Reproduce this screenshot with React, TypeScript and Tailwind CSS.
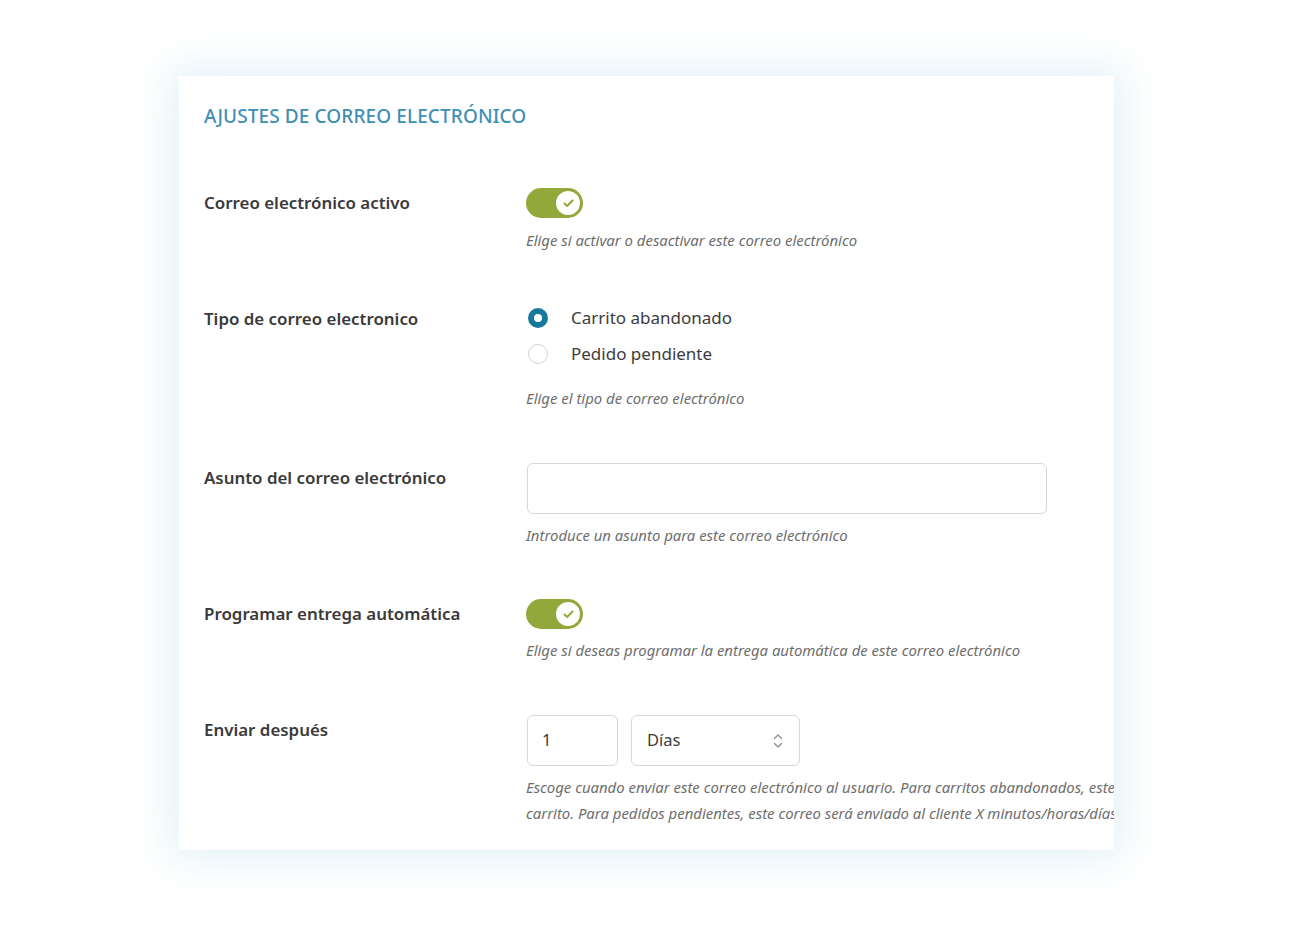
import React from "react";

const font = { fontFamily: '"Noto Sans", "Open Sans", sans-serif' };

function Toggle() {
  return (
    <div className="relative h-[30px] w-[57px] rounded-full bg-[#93a83a]">
      <div className="absolute right-[3px] top-[3px] flex h-[24px] w-[24px] items-center justify-center rounded-full bg-white">
        <svg width="11" height="9" viewBox="0 0 11 9" fill="none">
          <path d="M1.5 4.5L4.2 7L9.5 1.5" stroke="#93a83a" strokeWidth="2" strokeLinecap="round" strokeLinejoin="round" />
        </svg>
      </div>
    </div>
  );
}

function Help({ children, className = "" }: { children: React.ReactNode; className?: string }) {
  return (
    <div className={`text-[14.9px] italic leading-[20px] text-[#6e6e6e] ${className}`}>{children}</div>
  );
}

function Label({ children }: { children: React.ReactNode }) {
  return (
    <div className="w-[322px] shrink-0 text-[16.9px] font-semibold leading-[30px] text-[#3a3a3a]">{children}</div>
  );
}

export default function App() {
  return (
    <div className="min-h-[939px] bg-white pl-[179px] pt-[76px]" style={font}>
      <div className="relative h-[774px] w-[935px] overflow-hidden bg-white pl-[25px] pt-[102px] shadow-[0_0_40px_8px_rgba(190,225,238,0.45)]">
        <div className="absolute left-[25px] top-[26px] text-[19px] font-medium uppercase leading-[28px] tracking-[0.1px] text-[#3f8fb5]">
          Ajustes de correo electrónico
        </div>

        <div className="mt-[10px] flex">
          <Label>Correo electrónico activo</Label>
          <div>
            <Toggle />
            <Help className="mt-[12px]">Elige si activar o desactivar este correo electrónico</Help>
          </div>
        </div>

        <div className="mt-[54px] flex">
          <Label>Tipo de correo electronico</Label>
          <div>
            <div className="flex h-[28px] items-center">
              <div className="ml-[2px] h-[20px] w-[20px] rounded-full border-[6px] border-[#17799a] bg-white" />
              <span className="ml-[23px] text-[17px] text-[#3c3c3c]">Carrito abandonado</span>
            </div>
            <div className="mt-[8px] flex h-[28px] items-center">
              <div className="ml-[2px] h-[20px] w-[20px] rounded-full border border-[#cfd3d8] bg-white" />
              <span className="ml-[23px] text-[17px] text-[#3c3c3c]">Pedido pendiente</span>
            </div>
            <Help className="mt-[20px]">Elige el tipo de correo electrónico</Help>
          </div>
        </div>

        <div className="mt-[55px] flex">
          <Label>Asunto del correo electrónico</Label>
          <div>
            <div className="ml-px h-[51px] w-[520px] rounded-[6px] border border-[#d5d8dc] bg-white" />
            <Help className="mt-[11px]">Introduce un asunto para este correo electrónico</Help>
          </div>
        </div>

        <div className="mt-[54px] flex">
          <Label>Programar entrega automática</Label>
          <div>
            <Toggle />
            <Help className="mt-[11px]">Elige si deseas programar la entrega automática de este correo electrónico</Help>
          </div>
        </div>

        <div className="mt-[55px] flex">
          <Label>Enviar después</Label>
          <div className="min-w-0">
            <div className="ml-px flex gap-[13px]">
              <div className="flex h-[51px] w-[91px] items-center rounded-[6px] border border-[#d5d8dc] bg-white pl-[14px] text-[16.5px] text-[#3c3c3c]">
                1
              </div>
              <div className="flex h-[51px] w-[169px] items-center justify-between rounded-[6px] border border-[#d5d8dc] bg-white pl-[15px] pr-[16px] text-[16.5px] text-[#3c3c3c]">
                <span>Días</span>
                <svg width="10" height="16" viewBox="0 0 10 16" fill="none">
                  <path d="M1.5 5.5L5 2L8.5 5.5" stroke="#8a8f96" strokeWidth="1.3" strokeLinecap="round" strokeLinejoin="round" />
                  <path d="M1.5 10.5L5 14L8.5 10.5" stroke="#8a8f96" strokeWidth="1.3" strokeLinecap="round" strokeLinejoin="round" />
                </svg>
              </div>
            </div>
            <div className="mt-[8px] whitespace-nowrap text-[14.9px] italic leading-[26px] text-[#6e6e6e]">
              <div>Escoge cuando enviar este correo electrónico al usuario. Para carritos abandonados, este correo será enviado X minutos/horas/días después del abandono del</div>
              <div>carrito. Para pedidos pendientes, este correo será enviado al cliente X minutos/horas/días después de la creación del pedido.</div>
            </div>
          </div>
        </div>
      </div>
    </div>
  );
}
